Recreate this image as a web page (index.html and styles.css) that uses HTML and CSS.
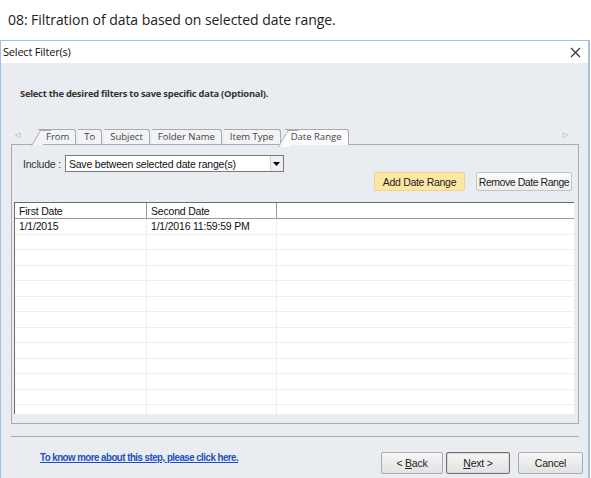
FILE: index.html
```html
<!DOCTYPE html>
<html>
<head>
<meta charset="utf-8">
<link rel="stylesheet" href="styles.css">
</head>
<body>
<div class="caption">08: Filtration of data based on selected date range.</div>
<div class="dialog">
  <div class="titlebar">
    <span class="title">Select Filter(s)</span>
    <svg class="close" width="11" height="11" viewBox="0 0 11 11"><path d="M1 1L10 10M10 1L1 10" stroke="#333" stroke-width="1.2"/></svg>
  </div>
  <div class="body">
    <div class="intro">Select the desired filters to save specific data (Optional).</div>
    <div class="tabstrip">
      <span class="arrow-left">&#9665;</span>
      <div class="tabs">
        <span class="tab first">From</span>
        <span class="tab">To</span>
        <span class="tab">Subject</span>
        <span class="tab">Folder Name</span>
        <span class="tab">Item Type</span>
        <span class="tab active">Date Range</span>
      </div>
      <span class="arrow-right">&#9655;</span>
    </div>
    <div class="panel">
      <div class="include-row">
        <span class="inc-label">Include :</span>
        <div class="select">
          <span>Save between selected date range(s)</span>
          <span class="drop"><svg width="7" height="4" viewBox="0 0 7 4"><path d="M0 0H7L3.5 4Z" fill="#000"/></svg></span>
        </div>
      </div>
      <div class="btn-row">
        <button class="btn add">Add Date Range</button>
        <button class="btn remove">Remove Date Range</button>
      </div>
      <div class="grid">
        <div class="row head"><span class="c1">First Date</span><span class="c2">Second Date</span><span class="c3"></span></div>
        <div class="row"><span class="c1">1/1/2015</span><span class="c2">1/1/2016 11:59:59 PM</span><span class="c3"></span></div>
        <div class="row"><span class="c1"></span><span class="c2"></span><span class="c3"></span></div>
        <div class="row"><span class="c1"></span><span class="c2"></span><span class="c3"></span></div>
        <div class="row"><span class="c1"></span><span class="c2"></span><span class="c3"></span></div>
        <div class="row"><span class="c1"></span><span class="c2"></span><span class="c3"></span></div>
        <div class="row"><span class="c1"></span><span class="c2"></span><span class="c3"></span></div>
        <div class="row"><span class="c1"></span><span class="c2"></span><span class="c3"></span></div>
        <div class="row"><span class="c1"></span><span class="c2"></span><span class="c3"></span></div>
        <div class="row"><span class="c1"></span><span class="c2"></span><span class="c3"></span></div>
        <div class="row"><span class="c1"></span><span class="c2"></span><span class="c3"></span></div>
        <div class="row"><span class="c1"></span><span class="c2"></span><span class="c3"></span></div>
        <div class="row"><span class="c1"></span><span class="c2"></span><span class="c3"></span></div>
        <div class="row last"><span class="c1"></span><span class="c2"></span><span class="c3"></span></div>
      </div>
    </div>
    <div class="footer">
      <a class="help" href="#">To know more about this step, please click here.</a>
      <div class="nav">
        <button class="nbtn back"><span>&lt; <u>B</u>ack</span></button>
        <button class="nbtn next"><span><u>N</u>ext &gt;</span></button>
        <button class="nbtn cancel">Cancel</button>
      </div>
    </div>
  </div>
</div>
</body>
</html>
```
FILE: styles.css
```css
* { box-sizing: border-box; }
html, body { margin: 0; padding: 0; background: #fff; }
body { width: 591px; height: 478px; overflow: hidden; font-family: "Liberation Sans", Arial, sans-serif; }

.caption {
  height: 40px;
  padding: 10px 0 0 8px;
  font-family: "Open Sans", "Noto Sans", sans-serif;
  font-size: 14px;
  color: #222;
  letter-spacing: -0.05px;
}

.dialog {
  width: 590px;
  height: 438px;
  border: 1px solid #9ec3e6;
  border-right-width: 2px;
  border-bottom: none;
  display: flex;
  flex-direction: column;
}

.titlebar {
  height: 22px;
  background: #fff;
  display: flex;
  align-items: center;
  justify-content: space-between;
  padding: 0 7px 2px 2px;
}
.title { font-family: "Open Sans", "Noto Sans", sans-serif; font-size: 11px; color: #111; letter-spacing: -0.2px; }
.close { margin-top: 2px; }

.body {
  flex: 1;
  background: #e9ecf0;
  display: flex;
  flex-direction: column;
}

.intro {
  padding: 24px 0 0 19px;
  height: 65px;
  font-family: "Open Sans", "Noto Sans", sans-serif;
  font-weight: 700;
  font-size: 9.4px;
  color: #333;
  letter-spacing: -0.25px;
}

.tabstrip {
  height: 16px;
  display: flex;
  align-items: flex-end;
  padding: 0 0 0 14px;
}
.arrow-left, .arrow-right { font-size: 7px; color: #999; align-self: center; margin-top: -2px; }
.arrow-left { width: 18px; }
.arrow-right { margin-left: auto; margin-right: 20px; }
.tabs { display: flex; align-items: flex-end; height: 16px; }
.tab {
  height: 15px;
  padding: 0 6px;
  background: #f2f3f5;
  border: 1px solid #a8acb2;
  border-bottom: none;
  border-left: none;
  border-radius: 0 3px 0 0;
  font-family: "Open Sans", "Noto Sans", sans-serif;
  font-size: 9.5px;
  line-height: 14px;
  color: #444;
  margin-right: 2px;
  position: relative;
  z-index: 0;
}
.tab.first { margin-left: 5px; padding-left: 8px; padding-right: 6px; }
.tab.first::before, .tab.active::before {
  content: "";
  position: absolute;
  left: -7px;
  top: 0;
  width: 10px;
  height: 15px;
  border-left: 1px solid #a8acb2;
  border-top: 1px solid #a8acb2;
  transform: skewX(-30deg);
  transform-origin: bottom left;
  background: inherit;
  z-index: -1;
}
.tab.active {
  background: #fbfbfc;
  height: 16px;
  margin-left: 2px;
  padding: 0 7px 0 6px;
  margin-bottom: -1px;
  z-index: 2;
}
.tab.active::before { height: 16px; }

.panel {
  margin: 0 9px 0 10px;
  height: 280px;
  border: 1px solid #a8acb2;
  background: #e9ecf0;
  padding: 10px 6px 0 2px;
}

.include-row { display: flex; align-items: center; padding-left: 9px; }
.inc-label { font-size: 10.5px; color: #333; margin-right: 4px; letter-spacing: -0.2px; }
.select {
  width: 219px;
  height: 17px;
  background: #fff;
  border: 1px solid #7a7a7a;
  display: flex;
  align-items: center;
  justify-content: space-between;
  font-size: 10.5px;
  padding: 0 0 0 3px;
  color: #111;
  letter-spacing: -0.2px;
}
.drop {
  width: 13px; height: 15px;
  display: flex; align-items: center; justify-content: center;
  background: #f0f0f0;
  border-left: 1px solid #d0d0d0;
}

.btn-row { display: flex; justify-content: flex-end; gap: 11px; margin-top: 0; }
.btn {
  height: 19px;
  font-family: "Liberation Sans", Arial, sans-serif;
  font-size: 10.5px;
  color: #222;
  letter-spacing: -0.3px;
  padding: 0;
  border-radius: 2px;
  white-space: nowrap;
}
.btn.add { width: 91px; background: #fde7a3; border: 1px solid #f2d488; }
.btn.remove { width: 96px; background: linear-gradient(#fbfbfb, #eeeeee); border: 1px solid #c4c4c4; letter-spacing: -0.45px; }

.grid {
  margin-top: 11px;
  width: 560px;
  height: 212px;
  background: #fff;
  border-top: 1px solid #6b6b6b;
  border-left: 1px solid #6b6b6b;
  overflow: hidden;
}
.row { display: flex; height: 15.5px; border-bottom: 1px solid #eceef0; font-size: 10.5px; color: #111; letter-spacing: -0.2px; }
.row.last { border-bottom: none; }
.row span { padding: 1px 0 0 4px; line-height: 13px; white-space: nowrap; }
.c1 { width: 132px; border-right: 1px solid #eceef0; }
.c2 { width: 130px; border-right: 1px solid #eceef0; }
.c3 { flex: 1; }
.row.head { height: 16px; border-bottom: 1px solid #9a9a9a; }
.row.head .c1, .row.head .c2 { border-right: 1px solid #9a9a9a; }
.row.head span { padding-top: 2px; }

.footer {
  margin: 12px 9px 0 10px;
  border-top: 1px solid #a8acb2;
  display: flex;
  align-items: flex-end;
  justify-content: space-between;
  flex: 1;
  padding: 0 0 4px 29px;
}
.help {
  font-size: 10px;
  color: #1f4fbf;
  text-decoration: underline;
  letter-spacing: -0.5px;
  margin-bottom: 11px;
  font-weight: 700;
  font-family: "Liberation Sans", Arial, sans-serif;
  transform: scaleX(0.965);
  transform-origin: left;
}
.nav { display: flex; margin-right: -4px; }
.nbtn {
  width: 62px;
  height: 22px;
  background: linear-gradient(#f6f6f6, #e2e2e2);
  border: 1px solid #acacac;
  border-radius: 2px;
  font-family: "Liberation Sans", Arial, sans-serif;
  font-size: 10.5px;
  color: #222;
  padding: 0;
  letter-spacing: -0.2px;
}
.nbtn.next { width: 64px; margin-left: 3px; border: 1px solid #707070; box-shadow: inset 0 0 0 1px #d8d8d8; }
.nbtn.cancel { margin-left: 8px; width: 65px; }
```
